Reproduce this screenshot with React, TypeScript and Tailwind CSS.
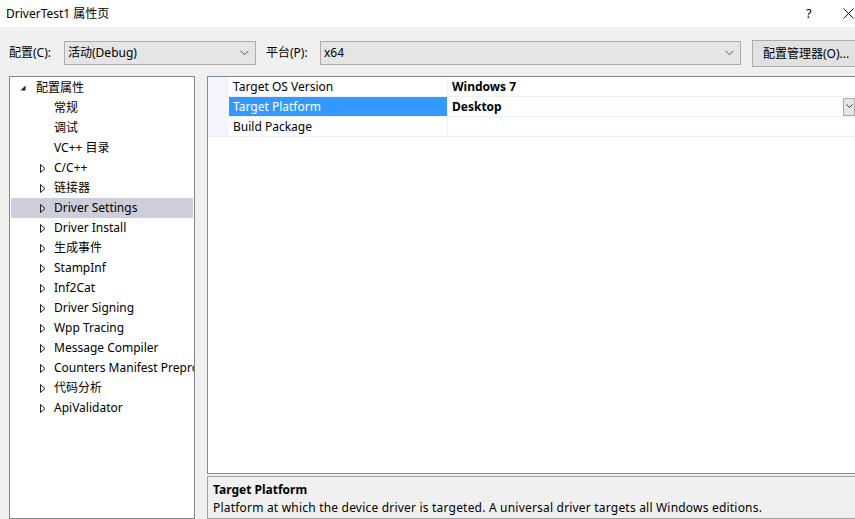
import React from "react"

const font = { fontFamily: '"Noto Sans", "Noto Sans CJK SC", sans-serif' }

const treeItems: { label: string; level: number; arrow: "open" | "closed" | null; selected?: boolean }[] = [
  { label: "配置属性", level: 0, arrow: "open" },
  { label: "常规", level: 1, arrow: null },
  { label: "调试", level: 1, arrow: null },
  { label: "VC++ 目录", level: 1, arrow: null },
  { label: "C/C++", level: 1, arrow: "closed" },
  { label: "链接器", level: 1, arrow: "closed" },
  { label: "Driver Settings", level: 1, arrow: "closed", selected: true },
  { label: "Driver Install", level: 1, arrow: "closed" },
  { label: "生成事件", level: 1, arrow: "closed" },
  { label: "StampInf", level: 1, arrow: "closed" },
  { label: "Inf2Cat", level: 1, arrow: "closed" },
  { label: "Driver Signing", level: 1, arrow: "closed" },
  { label: "Wpp Tracing", level: 1, arrow: "closed" },
  { label: "Message Compiler", level: 1, arrow: "closed" },
  { label: "Counters Manifest Preprocessor", level: 1, arrow: "closed" },
  { label: "代码分析", level: 1, arrow: "closed" },
  { label: "ApiValidator", level: 1, arrow: "closed" },
]

const props = [
  { name: "Target OS Version", value: "Windows 7" },
  { name: "Target Platform", value: "Desktop", selected: true },
  { name: "Build Package", value: "" },
]

function Chevron() {
  return (
    <svg width="9" height="6" viewBox="0 0 9 6" className="shrink-0">
      <polyline points="0.5,0.8 4.5,4.8 8.5,0.8" fill="none" stroke="#555" strokeWidth="1" />
    </svg>
  )
}

function Combo({ text, className }: { text: string; className: string }) {
  return (
    <div className={`flex h-[24px] shrink-0 items-center justify-between border border-[#acacac] bg-[#e5e5e5] pl-[3px] pr-[6px] text-[12px] text-black ${className}`}>
      <span>{text}</span>
      <Chevron />
    </div>
  )
}

function Arrow({ kind }: { kind: "open" | "closed" }) {
  if (kind === "open") {
    return (
      <svg width="6" height="6" viewBox="0 0 6 6">
        <polygon points="5.5,0.5 5.5,5.5 0.5,5.5" fill="#1e1e1e" />
      </svg>
    )
  }
  return (
    <svg width="6" height="9" viewBox="0 0 6 9">
      <polygon points="0.5,0.5 5,4.5 0.5,8.5" fill="none" stroke="#1e1e1e" strokeWidth="1" />
    </svg>
  )
}

export default function App() {
  return (
    <div className="flex h-[519px] w-[855px] flex-col overflow-hidden bg-[#f0f0f0] text-black" style={font}>
      {/* title bar */}
      <div className="flex h-[27px] shrink-0 items-center bg-white pl-[6px] text-[12px]">
        <span className="flex-1">DriverTest1 属性页</span>
        <span className="w-[10px] text-[13px]">?</span>
        <span className="ml-[27px] mr-[1px] flex w-[11px] items-center">
          <svg width="11" height="11" viewBox="0 0 11 11">
            <path d="M0.5 0.5 L10.5 10.5 M10.5 0.5 L0.5 10.5" stroke="#111" strokeWidth="1" />
          </svg>
        </span>
      </div>

      {/* configuration row */}
      <div className="flex h-[49px] shrink-0 items-start pt-[14px] text-[12px]">
        <span className="ml-[9px] flex h-[24px] w-[55px] shrink-0 items-center">配置(C):</span>
        <Combo text="活动(Debug)" className="w-[192px]" />
        <span className="ml-[10px] flex h-[24px] w-[54px] shrink-0 items-center">平台(P):</span>
        <Combo text="x64" className="w-[421px]" />
        <div className="ml-[11px] flex h-[27px] w-[110px] shrink-0 -translate-y-px items-center border border-[#adadad] bg-[#e1e1e1] pl-[10px]">
          配置管理器(O)...
        </div>
      </div>

      {/* main */}
      <div className="flex min-h-0 flex-1 gap-[12px] pl-[9px]">
        <div className="w-[186px] shrink-0 overflow-hidden border border-[#828790] bg-white pt-px pl-px pr-px text-[12px]">
          {treeItems.map((item) => (
            <div
              key={item.label}
              className={`flex h-[20px] items-center whitespace-nowrap ${item.selected ? "bg-[#cccedb]" : ""}`}
            >
              {item.level === 0 ? (
                <>
                  <span className="ml-[9px] flex w-[7px] shrink-0 items-center">{item.arrow && <Arrow kind={item.arrow} />}</span>
                  <span className="ml-[9px]">{item.label}</span>
                </>
              ) : (
                <>
                  <span className="ml-[29px] flex w-[7px] shrink-0 items-center">{item.arrow && <Arrow kind={item.arrow} />}</span>
                  <span className="ml-[7px]">{item.label}</span>
                </>
              )}
            </div>
          ))}
        </div>

        <div className="flex min-w-0 flex-1 flex-col gap-[2px]">
          <div className="h-[398px] shrink-0 border border-r-0 border-[#828790] bg-white text-[12px]">
            {props.map((p) => (
              <div key={p.name} className="flex h-[20px] border-b border-[#f0f0fa]">
                <div className="w-[21px] shrink-0 bg-[#f5f5fd]" />
                <div
                  className={`flex w-[219px] shrink-0 items-center border-r border-[#f0f0fa] pl-[4px] ${p.selected ? "bg-[#3399ff] text-white" : ""}`}
                >
                  {p.name}
                </div>
                <div className="flex flex-1 items-center justify-between pl-[4px] font-bold">
                  <span>{p.value}</span>
                  {p.selected && (
                    <span className="flex h-[18px] w-[12px] items-center justify-center border border-[#acacac] bg-[#e5e5e5]">
                      <svg width="7" height="5" viewBox="0 0 7 5">
                        <polyline points="0.5,0.5 3.5,3.5 6.5,0.5" fill="none" stroke="#333" strokeWidth="1" />
                      </svg>
                    </span>
                  )}
                </div>
              </div>
            ))}
          </div>
          <div className="flex-1 border border-r-0 border-[#a0a0a0] bg-[#f0f0f0] pl-[5px] pt-[4px] text-[12px] leading-[18px]">
            <div className="font-bold">Target Platform</div>
            <div className="tracking-[0.2px]">Platform at which the device driver is targeted. A universal driver targets all Windows editions.</div>
          </div>
        </div>
      </div>
    </div>
  )
}
